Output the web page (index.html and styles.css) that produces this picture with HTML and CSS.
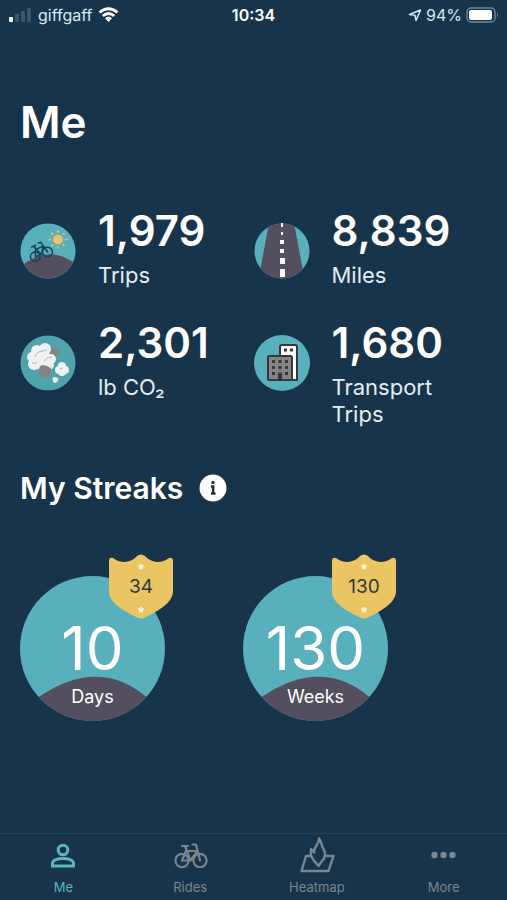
FILE: index.html
```html
<!DOCTYPE html>
<html lang="en">
<head>
    <meta charset="UTF-8">
    <meta name="viewport" content="width=device-width, initial-scale=1.0">
    <title>Me</title>
    <link rel="stylesheet" href="styles.css">
</head>
<body>
    <!-- shared shapes -->
    <svg class="sprite" aria-hidden="true">
        <symbol id="bike" viewBox="0 0 34 26">
            <g fill="none" stroke="currentColor" stroke-width="2.2" stroke-linecap="round" stroke-linejoin="round">
                <circle cx="8" cy="17.500" r="6.600"/>
                <circle cx="26" cy="17.500" r="6.600"/>
                <path d="M8 17.500 12 8H23.500M11 3l5.500 14.500L23.500 8M8 17.500h8.500M8 3h6M18.500 1.500H22L26 17.500"/>
            </g>
        </symbol>
        <symbol id="shield" viewBox="0 0 66 65">
            <path fill="#ebc463" d="M1 7Q1 3 5 4Q10 8 17 8Q25 7 29 2Q33-1 37 2Q41 7 49 8Q56 8 61 4Q65 3 65 7V37C65 49 50 57 38 63Q33 66 28 63C16 57 1 49 1 37Z"/>
            <path id="star" fill="#fbf3df" stroke="#fbf3df" stroke-linejoin="round" d="M33 10l.8 1.700 2 .2-1.500 1.300.4 2L33 14.200l-1.700 1 .4-2-1.500-1.300 2-.2z"/>
            <use href="#star" y="43"/>
        </symbol>
        <symbol id="hill-disc" viewBox="0 0 144 144">
            <circle cx="72" cy="72" r="72" fill="#58b0bc"/>
            <path d="M18.500 120.200Q78 80 125.500 120.200A72 72 0 0 1 18.500 120.200z" fill="#534f5e"/>
        </symbol>
    </svg>

    <header class="status">
        <div class="status-left">
            <svg width="24" height="16" viewBox="0 0 24 16" aria-hidden="true">
                <rect x="1" y="10" width="4" height="5" rx="1" fill="#fff"/>
                <g fill="#3a566c">
                    <rect x="7" y="7" width="4" height="8" rx="1"/>
                    <rect x="13" y="4" width="4" height="11" rx="1"/>
                    <rect x="19" y="1" width="4" height="14" rx="1"/>
                </g>
            </svg>
            <span>giffgaff</span>
            <svg width="21" height="16" viewBox="0 0 21 16" aria-label="Wi-Fi">
                <g fill="none" stroke="#fff" stroke-width="2.700">
                    <path d="M1.500 5.500Q10.500-2 19.500 5.500"/>
                    <path d="M4.800 9Q10.500 4 16.200 9"/>
                </g>
                <path fill="#fff" d="M7 11.200Q10.500 8.300 14 11.200L10.500 15z"/>
            </svg>
        </div>
        <time>10:34</time>
        <div class="status-right">
            <svg width="14" height="14" viewBox="0 0 14 14" aria-hidden="true">
                <path fill="none" stroke="#dce8f2" stroke-width="1.500" stroke-linejoin="round" d="M1.500 6.500 12.500 2 8 12.500 7 7.300z"/>
            </svg>
            <span>94%</span>
            <svg width="33" height="16" viewBox="0 0 33 16" aria-label="Battery">
                <rect x="1" y="1" width="28" height="14" rx="4" fill="none" stroke="#70859a" stroke-width="1.500"/>
                <rect x="3" y="3" width="23" height="10" rx="2" fill="#fff"/>
                <path d="M31 5.500q2 2.500 0 5z" fill="#70859a"/>
            </svg>
        </div>
    </header>

    <main>
        <h1>Me</h1>

        <section class="stats">
            <div class="stat">
                <svg class="stat-icon" viewBox="0 0 56 56" aria-hidden="true">
                    <clipPath id="disc"><circle cx="28" cy="28" r="27.500"/></clipPath>
                    <g clip-path="url(#disc)">
                        <rect width="56" height="56" fill="#58b0bc"/>
                        <path d="M0 44Q28 20 56 41V56H0z" fill="#534f5e"/>
                    </g>
                    <g stroke="#ebc463" stroke-width="1.700" stroke-linecap="round">
                        <path d="M38 8v1M38 24v1M29.500 16.500h1M45.500 16.500h1M32 10.500l.7.7M43.300 21.800l.7.7M44 10.500l-.7.7M32.700 21.800l-.7.7"/>
                        <circle cx="38" cy="16.500" r="4" fill="#ebc463"/>
                    </g>
                    <g transform="rotate(-21 20 29)" color="#17465b"><use href="#bike" x="8" y="19" width="25" height="19"/></g>
                </svg>
                <div>
                    <p class="number">1,979</p>
                    <p class="label">Trips</p>
                </div>
            </div>
            <div class="stat">
                <svg class="stat-icon" viewBox="0 0 56 56" aria-hidden="true">
                    <g clip-path="url(#disc)">
                        <rect width="56" height="56" fill="#58b0bc"/>
                        <path d="M15 0H40L49 48V56H6V48z" fill="#534f5e"/>
                    </g>
                    <path fill="#f4f6f8" d="M27 0h2v4h-2zM27 9h2v3h-2zM26 17h4v4h-4zM26 26h4v4h-4zM26 35h5v6h-5zM26 46h5v8h-5z"/>
                </svg>
                <div>
                    <p class="number">8,839</p>
                    <p class="label">Miles</p>
                </div>
            </div>
            <div class="stat">
                <svg class="stat-icon" viewBox="0 0 56 56" aria-hidden="true">
                    <circle cx="28" cy="28" r="27.500" fill="#4fa3ad"/>
                    <circle cx="35" cy="17" r="4.500" fill="#858484"/>
                    <g fill="#f0f1f2">
                        <circle cx="17" cy="16" r="6"/><circle cx="25" cy="14" r="6"/><circle cx="12" cy="22" r="5"/>
                        <circle cx="14" cy="29" r="6"/><circle cx="22" cy="24" r="9"/><circle cx="31" cy="24" r="5"/><circle cx="29" cy="30" r="5"/>
                        <circle cx="23" cy="32" r="5"/>
                        <circle cx="42" cy="31" r="4"/><circle cx="39" cy="35" r="4"/><circle cx="45" cy="35" r="4"/><circle cx="42" cy="37" r="4"/>
                        <circle cx="34.500" cy="44" r="2"/><circle cx="36.500" cy="44.500" r="2"/><circle cx="35" cy="46" r="2"/>
                    </g>
                    <path d="M20 31l3-1 4 1 4 2v4l-2 5-4 1-5-1-2-5z" fill="#858484"/>
                    <path d="M15 22q1-5 7-6l5-1M24 26q2-4 8-4M12 28h5M40 34l3-1" fill="none" stroke="#b8b7b0"/>
                </svg>
                <div>
                    <p class="number">2,301</p>
                    <p class="label">lb CO₂</p>
                </div>
            </div>
            <div class="stat">
                <svg class="stat-icon" viewBox="0 0 56 56" aria-hidden="true">
                    <circle cx="28" cy="28" r="28" fill="#58b0bc"/>
                    <path d="M26 20v-8q0-2 2-2h13q2 0 2 2v33h-5" fill="#fff" stroke="#37373b" stroke-width="2"/>
                    <path d="M30 13.500h3v3h-3zM36 13.500h3v3h-3z" fill="#37373b"/>
                    <rect x="14" y="21" width="24" height="24" rx="1.500" fill="#858484" stroke="#37373b" stroke-width="2"/>
                    <path fill="#37373b" d="M18 25h3v3h-3zM24.500 25h3v3h-3zM31 25h3v3h-3zM18 31h3v3h-3zM24.500 31h3v3h-3zM31 31h3v3h-3zM18 37h3v3h-3zM31 37h3v3h-3zM24 37.500h4V45h-4z"/>
                </svg>
                <div>
                    <p class="number">1,680</p>
                    <p class="label">Transport<br>Trips</p>
                </div>
            </div>
        </section>

        <div class="streaks-head">
            <h2>My Streaks</h2>
            <button type="button" class="info" aria-label="About streaks">
                <svg width="28" height="28" viewBox="0 0 28 28" aria-hidden="true">
                    <circle cx="14" cy="14" r="13.500" fill="#fff"/>
                    <circle cx="14" cy="8.500" r="1.700" fill="#17344a"/>
                    <path d="M12 12.500h2.200V19M12 19.500h4.500" fill="none" stroke="#17344a" stroke-width="2.400"/>
                </svg>
            </button>
        </div>

        <section class="streaks">
            <div class="streak">
                <svg class="disc" aria-hidden="true"><use href="#hill-disc"/></svg>
                <p class="streak-number">10</p>
                <p class="streak-label">Days</p>
                <div class="badge">
                    <svg aria-hidden="true"><use href="#shield"/></svg>
                    <span>34</span>
                </div>
            </div>
            <div class="streak">
                <svg class="disc" aria-hidden="true"><use href="#hill-disc"/></svg>
                <p class="streak-number">130</p>
                <p class="streak-label">Weeks</p>
                <div class="badge">
                    <svg aria-hidden="true"><use href="#shield"/></svg>
                    <span>130</span>
                </div>
            </div>
        </section>
    </main>

    <nav class="tabs">
        <a href="#" class="active">
            <svg width="36" height="38" viewBox="0 0 36 38" aria-hidden="true">
                <g fill="none" stroke="currentColor" stroke-width="3">
                    <circle cx="18" cy="14" r="4.800"/>
                    <path d="M7.500 30V27.500C7.500 24 13 22.500 18 22.500S28.500 24 28.500 27.500V30z"/>
                </g>
            </svg>
            Me
        </a>
        <a href="#">
            <svg width="36" height="38" viewBox="0 0 36 38" aria-hidden="true"><use href="#bike" x="2" y="7" width="34" height="26"/></svg>
            Rides
        </a>
        <a href="#">
            <svg width="36" height="38" viewBox="0 0 36 38" aria-hidden="true">
                <g fill="none" stroke="currentColor" stroke-width="2.400" stroke-linejoin="round" stroke-linecap="round">
                    <path d="M11 20H7L2.500 35H29.500L34.500 20H26"/>
                    <path d="M19.500 30C16.500 25.500 10.500 23 12 13L15 16.500C15 10 20 9 20 2.500C23 6 22 9 24 12C27.500 18 26 22 23 25z"/>
                </g>
            </svg>
            Heatmap
        </a>
        <a href="#">
            <svg width="36" height="38" viewBox="0 0 36 38" fill="currentColor" aria-hidden="true">
                <circle cx="8.500" cy="19" r="3.200"/><circle cx="17.500" cy="19" r="3.200"/><circle cx="26.500" cy="19" r="3.200"/>
            </svg>
            More
        </a>
    </nav>
</body>
</html>
```

FILE: styles.css
```css
* {
    box-sizing: border-box;
}
body {
    font-family: Inter, "Liberation Sans", sans-serif;
    background-color: #17344a;
    color: #fff;
    margin: 0;
    min-height: 100vh;
    display: flex;
    flex-direction: column;
}
h1, h2, p {
    margin: 0;
}
.sprite {
    position: absolute;
    width: 0;
    height: 0;
}
.status {
    display: grid;
    grid-template-columns: 1fr auto 1fr;
    align-items: center;
    height: 30px;
    padding: 0 8px;
    font-size: 16px;
    color: #dce8f2;
}
.status time {
    font-weight: 600;
    color: #fff;
}
.status-left, .status-right {
    display: flex;
    align-items: center;
    gap: 6px;
}
.status-right {
    justify-content: flex-end;
    gap: 4px;
}
main {
    padding: 64px 20px 0;
}
h1 {
    font-size: 44px;
    font-weight: 600;
    line-height: 56px;
}
.stats {
    display: grid;
    grid-template-columns: 1fr 1fr;
    row-gap: 27px;
    margin-top: 54px;
}
.stat {
    display: flex;
    align-items: flex-start;
    gap: 22px;
}
.stat-icon {
    flex: none;
    width: 56px;
    height: 56px;
    margin-top: 19px;
}
.number {
    font-size: 42px;
    font-weight: 600;
    line-height: 54px;
}
.label {
    margin-top: 4px;
    font-size: 22px;
    line-height: 27px;
    color: #e4ecf4;
}
.streaks-head {
    display: flex;
    align-items: center;
    gap: 16px;
    margin-top: 40px;
}
h2 {
    font-size: 30px;
    font-weight: 600;
    line-height: 40px;
}
.info {
    display: flex;
    padding: 0;
    border: none;
    background: none;
    cursor: pointer;
}
.streaks {
    display: flex;
    gap: 78px;
    margin-top: 68px;
}
.streak {
    position: relative;
    width: 145px;
    height: 145px;
    padding-top: 36px;
    text-align: center;
}
/* teal disc with the hill, drawn behind the texts */
.disc {
    position: absolute;
    top: 0;
    left: 0;
    width: 100%;
    height: 100%;
}
.streak-number {
    position: relative;
    font-size: 60px;
    line-height: 72px;
}
.streak-label {
    position: relative;
    font-size: 18px;
    line-height: 26px;
}
.badge {
    position: absolute;
    top: -22px;
    right: -9px;
    width: 66px;
    height: 65px;
    display: flex;
    align-items: center;
    justify-content: center;
    font-size: 19px;
    color: #2c3a3c;
}
.badge svg {
    position: absolute;
    width: 100%;
    height: 100%;
}
.badge span {
    position: relative;
}
.tabs {
    display: grid;
    grid-template-columns: repeat(4, 1fr);
    margin-top: auto;
    height: 67px;
    border-top: 1px solid #24445b;
}
.tabs a {
    display: flex;
    flex-direction: column;
    align-items: center;
    padding-top: 2px;
    gap: 4px;
    font-size: 13px;
    line-height: 18px;
    color: #7b858d;
    text-decoration: none;
}
.tabs .active {
    color: #5bb5bf;
}
```
